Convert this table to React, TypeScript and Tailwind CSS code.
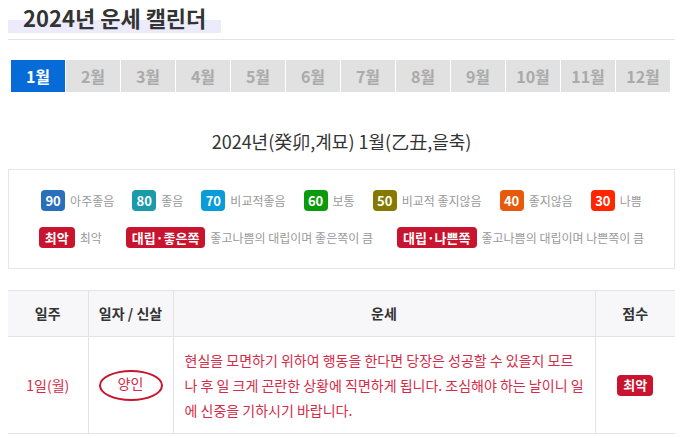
import React from "react";

const font = { fontFamily: '"Noto Sans CJK KR", "Noto Sans", sans-serif' };

const scores = [
  { n: "90", label: "아주좋음", cls: "bg-[#2a6fb9]" },
  { n: "80", label: "좋음", cls: "bg-[#1a9aab]" },
  { n: "70", label: "비교적좋음", cls: "bg-[#0a9bd9]" },
  { n: "60", label: "보통", cls: "bg-[#0b9a0b]" },
  { n: "50", label: "비교적 좋지않음", cls: "bg-[#877900]" },
  { n: "40", label: "좋지않음", cls: "bg-[#e65a0c]" },
  { n: "30", label: "나쁨", cls: "bg-[#ff2600]" },
];

const specials = [
  { n: "최악", label: "최악" },
  { n: "대립·좋은쪽", label: "좋고나쁨의 대립이며 좋은쪽이 큼" },
  { n: "대립·나쁜쪽", label: "좋고나쁨의 대립이며 나쁜쪽이 큼" },
];

const months = ["1월", "2월", "3월", "4월", "5월", "6월", "7월", "8월", "9월", "10월", "11월", "12월"];

const lines = [
  "현실을 모면하기 위하여 행동을 한다면 당장은 성공할 수 있을지 모르",
  "나 후 일 크게 곤란한 상황에 직면하게 됩니다. 조심해야 하는 날이니 일",
  "에 신중을 기하시기 바랍니다.",
];

export default function App() {
  return (
    <div style={font} className="w-[682px] h-[438px] overflow-hidden bg-white pl-[8px] pr-[7px]">
      <div className="h-[40px] border-b border-[#e3e3e3]">
        <h2 className="inline-block h-[34px] leading-[34px] px-[15px] text-[22px] font-bold text-[#333] bg-[linear-gradient(transparent_59%,#ecebfc_59%,#ecebfc_97%,transparent_97%)]">
          2024년 운세 캘린더
        </h2>
      </div>

      <div className="mt-[20px] pl-[3px] flex gap-[1px]">
        {months.map((m, i) => (
          <div
            key={m}
            className={
              i === 0
                ? "w-[54px] h-[32px] flex items-center justify-center bg-[#066bd7] text-white text-[16px] font-bold"
                : "w-[54px] h-[32px] flex items-center justify-center bg-[#e1e1e1] text-[#aaa] text-[16px] font-bold"
            }
          >
            {m}
          </div>
        ))}
      </div>

      <div className="mt-[37px] h-[24px] leading-[24px] text-center text-[18px] text-[#333]">
        2024년(癸卯,계묘) 1월(乙丑,을축)
      </div>

      <div className="mt-[16px] border border-[#e6e6e6] h-[100px] pt-[20px] flex flex-col items-center gap-[16px]">
        <div className="flex items-center justify-center gap-[18px] h-[21px]">
          {scores.map((s) => (
            <div key={s.n} className="flex items-center gap-[5px]">
              <span className={`${s.cls} h-[21px] w-[24px] rounded-[4px] flex items-center justify-center text-white text-[13px] font-bold`}>
                {s.n}
              </span>
              <span className="text-[12px] text-[#999]">{s.label}</span>
            </div>
          ))}
        </div>
        <div className="flex items-center justify-center gap-[24px] h-[21px]">
          {specials.map((s) => (
            <div key={s.n} className="flex items-center gap-[5px]">
              <span className="bg-[#c8142e] h-[21px] px-[6px] rounded-[4px] flex items-center justify-center text-white text-[13px] font-bold">
                {s.n}
              </span>
              <span className="text-[12px] text-[#999]">{s.label}</span>
            </div>
          ))}
        </div>
      </div>

      <table className="mt-[21px] w-[667px] border-collapse table-fixed">
        <colgroup>
          <col className="w-[80px]" />
          <col className="w-[85px]" />
          <col className="w-[422px]" />
          <col className="w-[80px]" />
        </colgroup>
        <thead>
          <tr className="bg-[#f7f7f9] h-[46px] border-t border-b border-[#e3e3e3] text-[14px] font-bold text-[#333]">
            <th className="border-r border-[#e3e3e3]">일주</th>
            <th className="border-r border-[#e3e3e3]">일자 / 신살</th>
            <th className="border-r border-[#e3e3e3]">운세</th>
            <th>점수</th>
          </tr>
        </thead>
        <tbody>
          <tr className="h-[97px] border-b border-[#e3e3e3] text-[14px] text-[#d42b48]">
            <td className="border-r border-[#e3e3e3] text-center">1일(월)</td>
            <td className="border-r border-[#e3e3e3]">
              <div className="flex justify-center">
                <div className="w-[64px] h-[31px] rounded-[50%] border-2 border-[#c8142e] flex items-center justify-center pb-[3px]">
                  양인
                </div>
              </div>
            </td>
            <td className="border-r border-[#e3e3e3] pl-[11px] pr-[4px] leading-[25px]">
              {lines.map((l) => (
                <div key={l} className="whitespace-nowrap">{l}</div>
              ))}
            </td>
            <td>
              <div className="flex justify-center">
                <span className="bg-[#c8142e] h-[21px] px-[6px] rounded-[4px] flex items-center justify-center text-white text-[13px] font-bold">
                  최악
                </span>
              </div>
            </td>
          </tr>
        </tbody>
      </table>
    </div>
  );
}
